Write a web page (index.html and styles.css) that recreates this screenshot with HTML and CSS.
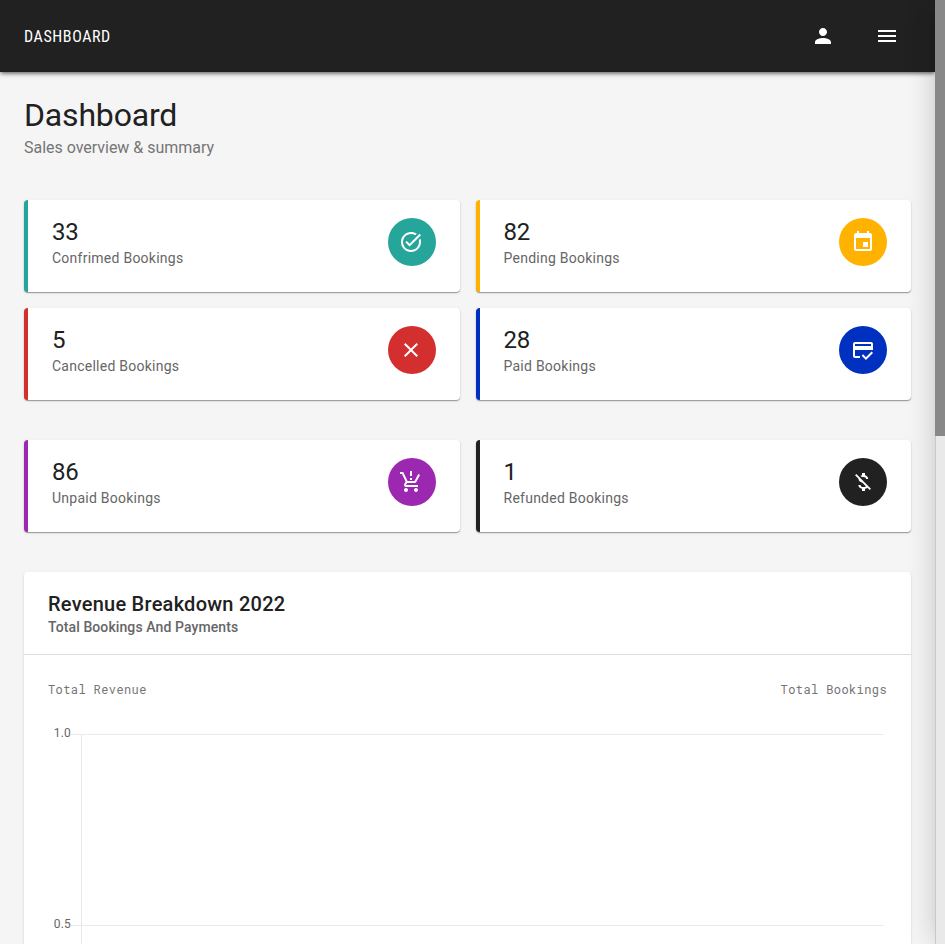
FILE: index.html
```html
<!DOCTYPE html>
<html lang="en">
<head>
<meta charset="utf-8">
<title>Dashboard</title>
<link rel="stylesheet" href="styles.css">
</head>
<body>
<div class="app">
  <div class="viewport">
    <header class="toolbar">
      <span class="brand">DASHBOARD</span>
      <nav class="actions">
        <svg class="icon" viewBox="0 0 24 24"><path d="M12 12c2.21 0 4-1.79 4-4s-1.79-4-4-4-4 1.79-4 4 1.79 4 4 4zm0 2c-2.67 0-8 1.34-8 4v2h16v-2c0-2.66-5.33-4-8-4z"/></svg>
        <svg class="icon" viewBox="0 0 24 24"><path d="M3 18h18v-2H3v2zm0-5h18v-2H3v2zm0-7v2h18V6H3z"/></svg>
      </nav>
    </header>
    <main class="content">
      <div class="heading">
        <h1>Dashboard</h1>
        <p>Sales overview &amp; summary</p>
      </div>
      <section class="stats">
        <article class="stat teal">
          <div><strong>33</strong><span>Confrimed Bookings</span></div>
          <i class="badge"><svg class="icon" viewBox="0 0 24 24"><path d="M22 5.18L10.59 16.6l-4.24-4.24 1.41-1.41 2.83 2.83 10-10L22 5.18zM19.79 10.22C19.92 10.79 20 11.39 20 12c0 4.42-3.58 8-8 8s-8-3.58-8-8 3.58-8 8-8c1.58 0 3.04.46 4.28 1.25l1.44-1.44C16.1 2.67 14.13 2 12 2 6.48 2 2 6.48 2 12s4.48 10 10 10 10-4.48 10-10c0-1.19-.22-2.33-.6-3.39l-1.61 1.61z"/></svg></i>
        </article>
        <article class="stat amber">
          <div><strong>82</strong><span>Pending Bookings</span></div>
          <i class="badge"><svg class="icon" viewBox="0 0 24 24"><path d="M17 12h-5v5h5v-5zM16 1v2H8V1H6v2H5c-1.11 0-1.99.9-1.99 2L3 19c0 1.1.89 2 2 2h14c1.1 0 2-.9 2-2V5c0-1.1-.9-2-2-2h-1V1h-2zm3 18H5V8h14v11z"/></svg></i>
        </article>
        <article class="stat red">
          <div><strong>5</strong><span>Cancelled Bookings</span></div>
          <i class="badge"><svg class="icon" viewBox="0 0 24 24"><path d="M19 6.41L17.59 5 12 10.59 6.41 5 5 6.41 10.59 12 5 17.59 6.41 19 12 13.41 17.59 19 19 17.59 13.41 12 19 6.41z"/></svg></i>
        </article>
        <article class="stat blue">
          <div><strong>28</strong><span>Paid Bookings</span></div>
          <i class="badge"><svg class="icon" viewBox="0 0 24 24"><path d="M20 4H4c-1.11 0-1.99.89-1.99 2L2 18c0 1.11.89 2 2 2h5v-2H4v-6h18V6c0-1.11-.89-2-2-2zm0 4H4V6h16v2zm-5.07 11.17l-2.83-2.83-1.41 1.41L14.93 22 22 14.93l-1.41-1.41-5.66 5.65z"/></svg></i>
        </article>
      </section>
      <section class="stats">
        <article class="stat purple">
          <div><strong>86</strong><span>Unpaid Bookings</span></div>
          <i class="badge"><svg class="icon" viewBox="0 0 24 24"><path d="M13 10h-2V8h2v2zm0-4h-2V1h2v5zM7 18c-1.1 0-1.99.9-1.99 2S5.9 22 7 22s2-.9 2-2-.9-2-2-2zm10 0c-1.1 0-1.99.9-1.99 2s.89 2 1.99 2 2-.9 2-2-.9-2-2-2zM8.1 13h7.45c.75 0 1.41-.41 1.75-1.03L21 4.96 19.25 4l-3.7 7H8.53L4.27 2H1v2h2l3.6 7.59-1.35 2.44C4.52 15.37 5.48 17 7 17h12v-2H7l1.1-2z"/></svg></i>
        </article>
        <article class="stat black">
          <div><strong>1</strong><span>Refunded Bookings</span></div>
          <i class="badge"><svg class="icon" viewBox="0 0 24 24"><path d="M12.5 6.9c1.78 0 2.44.85 2.5 2.1h2.21c-.07-1.72-1.12-3.3-3.21-3.81V3h-3v2.16c-.53.12-1.03.3-1.48.54l1.47 1.47c.41-.17.91-.27 1.51-.27zM5.33 4.06L4.06 5.33 7.5 8.77c0 2.08 1.56 3.21 3.91 3.91l3.51 3.51c-.34.48-1.05.91-2.42.91-2.06 0-2.87-.92-2.98-2.1h-2.2c.12 2.19 1.76 3.42 3.68 3.83V21h3v-2.15c.96-.18 1.82-.55 2.45-1.12l2.22 2.22 1.27-1.27L5.33 4.06z"/></svg></i>
        </article>
      </section>
      <section class="panel">
        <header class="panel-head">
          <h2>Revenue Breakdown 2022</h2>
          <p>Total Bookings And Payments</p>
        </header>
        <div class="axes"><span>Total Revenue</span><span>Total Bookings</span></div>
        <div class="chart">
          <div class="band"><span class="tick">1.0</span><div class="plot"></div></div>
          <div class="band"><span class="tick">0.5</span><div class="plot"></div></div>
        </div>
      </section>
    </main>
  </div>
  <aside class="drawer"></aside>
  <div class="scrollbar"><div class="thumb"></div></div>
</div>
</body>
</html>
```

FILE: styles.css
```css
* { box-sizing: border-box; }
body, h1, h2, p { margin: 0; }
body {
  background: #f5f5f5;
  color: #212121;
  font-family: Roboto, "Liberation Sans", sans-serif;
  overflow: hidden;
}
.app {
  position: relative;
  display: flex;
  height: 944px;
  overflow: hidden;
}
.viewport { flex: 1; min-width: 0; overflow: hidden; }
.toolbar {
  position: relative;
  height: 72px;
  padding: 0 36px 0 24px;
  display: flex;
  align-items: center;
  justify-content: space-between;
  background: #212121;
  color: #fff;
  box-shadow: 0 2px 4px -1px rgba(0,0,0,.4), 0 1px 5px rgba(0,0,0,.4);
}
.brand {
  font-family: "Roboto Condensed", Roboto, sans-serif;
  font-stretch: 75%;
  font-size: 16px;
  letter-spacing: .6px;
}
.actions { display: flex; gap: 40px; }
.icon { display: block; width: 24px; height: 24px; fill: #fff; }
.content { padding: 24px 24px 0; }
.heading { height: 104px; }
h1 { font-size: 32px; font-weight: 400; line-height: 38px; letter-spacing: -.17px; }
.heading p { margin-top: 4px; font-size: 16px; line-height: 20px; letter-spacing: -.02px; color: #757575; }
.stats {
  display: grid;
  grid-template-columns: 1fr 1fr;
  gap: 16px;
  margin-bottom: 40px;
}
.stat {
  display: flex;
  justify-content: space-between;
  height: 92px;
  padding: 18px 24px;
  border-left: 4px solid var(--c);
  border-radius: 4px;
  background: #fff;
  box-shadow: 0 1px 1px rgba(0,0,0,.34), 0 1px 3px rgba(0,0,0,.1);
}
.stat strong, .stat span { display: block; }
.stat strong { font-size: 24px; font-weight: 400; line-height: 28px; letter-spacing: -.3px; }
.stat span { margin-top: 2px; font-size: 14px; line-height: 20px; letter-spacing: .25px; color: #666; }
.badge {
  display: flex;
  align-items: center;
  justify-content: center;
  width: 48px;
  height: 48px;
  border-radius: 50%;
  background: var(--c);
}
.stat:nth-child(odd) .icon { margin-right: 1px; }
.teal { --c: #26a69a; }
.amber { --c: #ffb300; }
.red { --c: #d32f2f; }
.blue { --c: #0030bf; }
.purple { --c: #9c27b0; }
.black { --c: #212121; }
.panel {
  height: 500px;
  border-radius: 4px;
  background: #fff;
  box-shadow: 0 1px 1px rgba(0,0,0,.2), 0 1px 3px rgba(0,0,0,.1);
}
.panel-head { height: 83px; padding: 20px 24px; border-bottom: 1px solid #ddd; }
h2 { font-size: 20px; font-weight: 500; line-height: 24px; letter-spacing: .25px; }
.panel-head p { margin-top: 1px; font-size: 14px; font-weight: 500; line-height: 20px; letter-spacing: .1px; color: #666; }
.axes {
  display: flex;
  justify-content: space-between;
  padding: 24px 24px 0;
  height: 79px;
  font: 12px/20px "Roboto Mono", "DejaVu Sans Mono", monospace;
  letter-spacing: .4px;
  color: #757575;
}
.chart { padding: 0 27px 0 24px; }
.band { display: grid; grid-template-columns: 23px 1fr; height: 191px; }
.tick { margin-top: -9px; font-size: 12px; line-height: 16px; letter-spacing: .2px; text-align: right; color: #666; }
.plot {
  background: linear-gradient(#e8e8e8, #e8e8e8) 10px 0 / 1px 100% no-repeat;
  border-top: 1px solid #ebebeb;
}
.drawer {
  position: absolute;
  left: 935px;
  top: 0;
  width: 300px;
  height: 928px;
  box-shadow: 0 8px 10px -5px rgba(0,0,0,.12), 0 16px 24px 2px rgba(0,0,0,.09), 0 6px 30px 5px rgba(0,0,0,.07);
}
.scrollbar {
  position: relative;
  width: 10px;
  background: #e9e9e9;
  border-left: 1px solid #c8c8c8;
}
.thumb { width: 10px; height: 436px; margin-left: -1px; background: #888; }
```
